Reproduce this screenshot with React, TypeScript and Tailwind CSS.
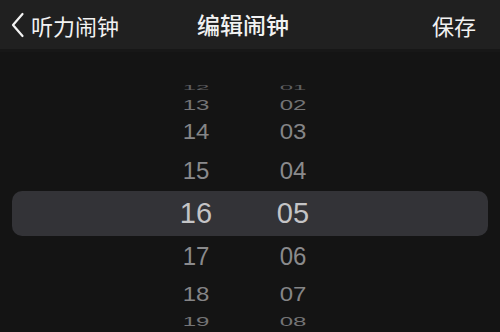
import React from 'react'

type Row = { h: string; m: string; height: string; sy: number; color: string }

const rowsAbove: Row[] = [
  { h: '12', m: '01', height: 'h-[16px]', sy: 0.3, color: 'text-[#5e5e60]' },
  { h: '13', m: '02', height: 'h-[17px]', sy: 0.62, color: 'text-[#747476]' },
  { h: '14', m: '03', height: 'h-[38px]', sy: 0.93, color: 'text-[#858587]' },
  { h: '15', m: '04', height: 'h-[40px]', sy: 1.02, color: 'text-[#8a8a8c]' },
]

const rowsBelow: Row[] = [
  { h: '17', m: '06', height: 'h-[40px]', sy: 1.08, color: 'text-[#8a8a8c]' },
  { h: '18', m: '07', height: 'h-[36px]', sy: 0.86, color: 'text-[#858587]' },
  { h: '19', m: '08', height: 'h-[20px]', sy: 0.56, color: 'text-[#747476]' },
]

function WheelRow({ row }: { row: Row }) {
  return (
    <div className={`${row.height} shrink-0 flex items-center pl-[166px] gap-[37px] ${row.color} overflow-hidden`}>
      {[row.h, row.m].map((v, i) => (
        <div key={i} className="w-[60px] flex justify-center">
          <span className="text-[24px] leading-none inline-block" style={{ transform: `scaleY(${row.sy})` }}>
            {v}
          </span>
        </div>
      ))}
    </div>
  )
}

export default function App() {
  return (
    <div
      className="w-[500px] h-[332px] overflow-hidden bg-[#141414] flex flex-col"
      style={{ fontFamily: '"Liberation Sans", Arial, sans-serif' }}
    >
      <header
        className="h-[52px] shrink-0 bg-[#202020] border-b-[3px] border-[#171717] flex items-center justify-between pl-[10px] pr-[24px] text-[#f2f2f2]"
        style={{ fontFamily: '"Noto Sans CJK SC", sans-serif' }}
      >
        <div className="flex items-center w-[140px]">
          <svg width="16" height="26" viewBox="0 0 16 26" fill="none" className="mr-[5px]">
            <path d="M12.5 2 L3 13 L12.5 24" stroke="#f2f2f2" strokeWidth="2.2" strokeLinecap="round" strokeLinejoin="round" />
          </svg>
          <span className="text-[22px] leading-none">听力闹钟</span>
        </div>
        <span className="text-[23px] leading-none font-medium">编辑闹钟</span>
        <div className="w-[140px] flex justify-end">
          <span className="text-[22px] leading-none">保存</span>
        </div>
      </header>

      <div className="h-[28px] shrink-0" />

      {rowsAbove.map((r) => (
        <WheelRow key={r.h} row={r} />
      ))}

      <div className="h-[45px] shrink-0 mx-[12px] rounded-[10px] bg-[#333337] flex items-center pl-[154px] gap-[37px] text-[#c4c4c6]">
        <div className="w-[60px] flex justify-center">
          <span className="text-[29px] leading-none">16</span>
        </div>
        <div className="w-[60px] flex justify-center">
          <span className="text-[29px] leading-none">05</span>
        </div>
      </div>

      {rowsBelow.map((r) => (
        <WheelRow key={r.h} row={r} />
      ))}
    </div>
  )
}
